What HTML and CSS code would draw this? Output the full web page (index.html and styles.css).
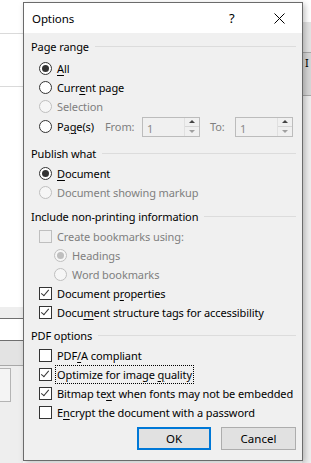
FILE: index.html
```html
<!DOCTYPE html>
<html lang="en">
<head>
    <meta charset="UTF-8">
    <title>Options</title>
    <link rel="stylesheet" href="styles.css">
</head>
<body>
    <!-- Word window behind the dialog -->
    <div class="backdrop">
        <div class="strip-left">
            <div class="band" style="height: 33px"></div>
            <div class="band line-light"></div>
            <div class="band" style="height: 52px"></div>
            <div class="band line-light"></div>
            <div class="band" style="height: 220px"></div>
            <div class="band grey-soft" style="height: 11px"></div>
            <div class="band line-dark"></div>
            <div class="band" style="height: 21px"></div>
            <div class="band line-dark"></div>
            <div class="band grey-mid" style="height: 24px"></div>
            <div class="band line-mid"></div>
            <div class="band grey-soft fill">
                <div class="ghost-box"></div>
            </div>
        </div>
        <div class="strip-right">
            <div class="band" style="height: 22px"></div>
            <div class="band grey-mid" style="height: 30px"></div>
            <div class="band line-mid"></div>
            <div class="band grey-deep" style="height: 42px"><span class="cursor">I</span></div>
            <div class="band line-mid"></div>
            <div class="band grey-soft fill"></div>
        </div>
    </div>

    <div class="dialog">
        <div class="titlebar">
            <span class="title">Options</span>
            <span class="help">?</span>
            <svg class="close" width="11" height="11" viewBox="0 0 11 11">
                <path d="M0.5 0.5 L10.5 10.5 M10.5 0.5 L0.5 10.5" stroke="#000" stroke-width="1"/>
            </svg>
        </div>
        <div class="content">
            <div class="group-head head-first"><span>Page range</span></div>
            <div class="opt first"><span class="radio checked"></span><span><u>A</u>ll</span></div>
            <div class="opt"><span class="radio"></span><span>Curr<u>e</u>nt page</span></div>
            <div class="opt disabled"><span class="radio"></span><span>Selection</span></div>
            <div class="opt pages">
                <span class="radio"></span><span class="pages-text">Pa<u>g</u>e(s)</span>
                <span class="spin-label from">From:</span>
                <span class="spin"><span class="spin-value">1</span><span class="spin-btns"><span class="up"></span><span class="down"></span></span></span>
                <span class="spin-label to">To:</span>
                <span class="spin"><span class="spin-value">1</span><span class="spin-btns"><span class="up"></span><span class="down"></span></span></span>
            </div>

            <div class="group-head"><span>Publish what</span></div>
            <div class="opt first"><span class="radio checked"></span><span><u>D</u>ocument</span></div>
            <div class="opt disabled"><span class="radio"></span><span>Document showing markup</span></div>

            <div class="group-head tight"><span>Include non-printing information</span></div>
            <div class="opt first disabled"><span class="check"></span><span>Create bookmarks using:</span></div>
            <div class="opt sub disabled"><span class="radio checked"></span><span>Headings</span></div>
            <div class="opt sub disabled"><span class="radio"></span><span>Word bookmarks</span></div>
            <div class="opt"><span class="check checked"></span><span>Document p<u>r</u>operties</span></div>
            <div class="opt"><span class="check checked"></span><span>Docu<u>m</u>ent structure tags for accessibility</span></div>

            <div class="group-head tight pdf"><span>PDF options</span></div>
            <div class="opt first"><span class="check"></span><span>PDF<u>/</u>A compliant</span></div>
            <div class="opt"><span class="check checked"></span><span class="focus">Optimize for image <u>q</u>uality</span></div>
            <div class="opt"><span class="check checked"></span><span>Bitmap te<u>x</u>t when fonts may not be embedded</span></div>
            <div class="opt"><span class="check"></span><span>E<u>n</u>crypt the document with a password</span></div>

            <div class="buttons">
                <button class="btn default">OK</button>
                <button class="btn">Cancel</button>
            </div>
        </div>
    </div>
</body>
</html>
```

FILE: styles.css
```css
body {
    margin: 0;
    width: 311px;
    height: 463px;
    overflow: hidden;
    position: relative;
    font-family: "Noto Sans", "Open Sans", sans-serif;
    font-size: 11px;
    letter-spacing: -0.1px;
    color: #000;
    background-color: #fff;
}
/* Backdrop */
.backdrop {
    display: flex;
    justify-content: space-between;
    height: 463px;
}
.strip-left {
    width: 23px;
    display: flex;
    flex-direction: column;
}
.strip-right {
    width: 9px;
    display: flex;
    flex-direction: column;
}
.band {
    flex: none;
}
.band.fill {
    flex: 1;
}
.line-light {
    height: 1px;
    background-color: #dadada;
}
.line-dark {
    height: 1px;
    background-color: #6f6f6f;
}
.line-mid {
    height: 1px;
    background-color: #a8a8a8;
}
.grey-soft {
    background-color: #eeeeee;
}
.grey-mid {
    background-color: #e3e3e3;
}
.grey-deep {
    background-color: #d6d6d6;
}
.ghost-box {
    margin-top: 2px;
    width: 10px;
    height: 32px;
    border: 1px solid #b4b4b4;
    border-left: none;
    background-color: #f4f4f4;
}
.cursor {
    display: block;
    padding: 4px 0 0 3px;
    font-size: 11px;
    line-height: 12px;
}
/* Dialog */
.dialog {
    position: absolute;
    left: 23px;
    top: 2px;
    width: 278px;
    height: 457px;
    border: 1px solid #6b6b6b;
    background-color: #f0f0f0;
    box-shadow: 2px 2px 6px rgba(0, 0, 0, 0.25);
    display: flex;
    flex-direction: column;
}
.titlebar {
    height: 30px;
    background-color: #fff;
    display: flex;
    align-items: center;
    padding-left: 8px;
    flex: none;
}
.title {
    flex: 1;
    font-size: 11.5px;
}
.help {
    width: 10px;
    margin-right: 35px;
    font-size: 13px;
}
.close {
    margin-right: 17px;
}
.content {
    padding: 4px 6px 0 7px;
}
.group-head {
    height: 18px;
    display: flex;
    align-items: center;
    margin-top: 7px;
}
.group-head.head-first {
    margin-top: 0;
}
.group-head.tight {
    margin-top: 5px;
}
.group-head.pdf {
    margin-top: 4px;
}
.group-head::after {
    content: "";
    flex: 1;
    height: 1px;
    margin-left: 6px;
    background-color: #dcdcdc;
}
.opt {
    height: 19px;
    display: flex;
    align-items: center;
    padding-left: 8px;
    gap: 5px;
    white-space: nowrap;
}
.opt.first {
    margin-top: 2px;
}
.head-first + .opt.first {
    margin-top: 4px;
}
.pdf + .opt.first {
    margin-top: 2px;
}
.opt.sub {
    padding-left: 23px;
}
.opt.disabled {
    color: #7f7f7f;
}
u {
    text-decoration-thickness: 1px;
    text-underline-offset: 2px;
}
/* Radio and checkbox */
.radio {
    flex: none;
    width: 11px;
    height: 11px;
    border: 1px solid #333;
    border-radius: 50%;
    background-color: #fff;
    display: flex;
    align-items: center;
    justify-content: center;
}
.radio.checked::after {
    content: "";
    width: 7px;
    height: 7px;
    border-radius: 50%;
    background-color: #333;
}
.disabled .radio {
    border-color: #bfbfbf;
    background-color: #f6f6f6;
}
.disabled .radio.checked::after {
    background-color: #bfbfbf;
}
.check {
    flex: none;
    width: 11px;
    height: 11px;
    border: 1px solid #333;
    background-color: #fff;
    position: relative;
}
.check.checked::after {
    content: "";
    position: absolute;
    left: 3px;
    top: 0;
    width: 3px;
    height: 7px;
    border-right: 1px solid #333;
    border-bottom: 1px solid #333;
    transform: rotate(40deg);
}
.disabled .check {
    border-color: #bfbfbf;
    background-color: #f0f0f0;
}
.focus {
    outline: 1px dotted #000;
    outline-offset: 1px;
}
/* Page spin boxes */
.opt.pages {
    height: 21px;
}
.pages-text {
    width: 43px;
}
.spin-label {
    color: #7f7f7f;
}
.spin-label.from {
    width: 32px;
}
.spin-label.to {
    width: 20px;
    margin-left: 5px;
}
.spin {
    flex: none;
    width: 56px;
    height: 18px;
    border: 1px solid #bcbcbc;
    background-color: #f0f0f0;
    display: flex;
}
.spin-value {
    flex: 1;
    color: #8a8a8a;
    padding: 3px 0 0 4px;
}
.spin-btns {
    width: 14px;
    display: flex;
    flex-direction: column;
    border-left: 1px solid #e0e0e0;
}
.spin-btns span {
    flex: 1;
    display: flex;
    align-items: center;
    justify-content: center;
}
.spin-btns .up {
    border-bottom: 1px solid #d6d6d6;
}
.spin-btns .up::after {
    content: "";
    border-left: 3px solid transparent;
    border-right: 3px solid transparent;
    border-bottom: 3px solid #444;
}
.spin-btns .down::after {
    content: "";
    border-left: 3px solid transparent;
    border-right: 3px solid transparent;
    border-top: 3px solid #a0a0a0;
}
/* Buttons */
.buttons {
    display: flex;
    justify-content: flex-end;
    gap: 10px;
    margin-top: 5px;
}
.btn {
    font-family: inherit;
    font-size: 11.5px;
    box-sizing: border-box;
    width: 75px;
    height: 23px;
    background-color: #e1e1e1;
    border: 1px solid #adadad;
    color: #000;
    padding: 0;
}
.btn.default {
    border: 2px solid #0078d7;
    width: 74px;
}
```
